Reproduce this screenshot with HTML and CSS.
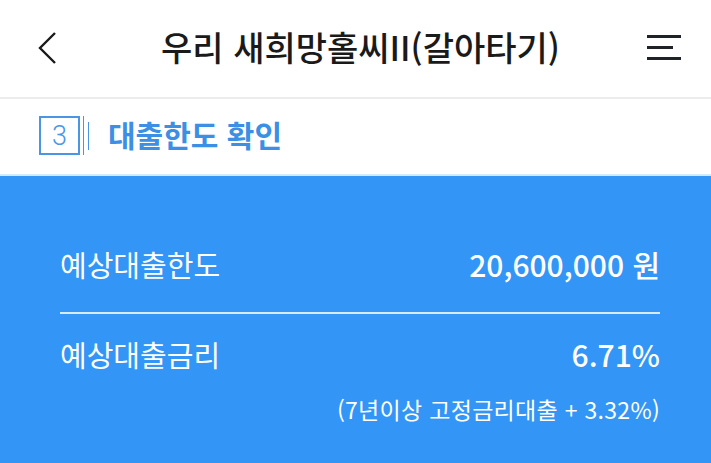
FILE: index.html
```html
<!DOCTYPE html>
<html lang="ko">
<head>
<meta charset="utf-8">
<link rel="stylesheet" href="styles.css">
</head>
<body>
<header class="topbar">
  <svg class="back" width="24" height="34" viewBox="0 0 24 34"><path d="M17 2 L2 17 L17 32" fill="none" stroke="#1a1a1a" stroke-width="2.4"/></svg>
  <h1 class="title">우리 새희망홀씨II(갈아타기)</h1>
  <svg class="menu" width="36" height="30" viewBox="0 0 36 30"><rect x="0" y="2" width="34" height="3" fill="#1f2327"/><rect x="0" y="13" width="26" height="3" fill="#1f2327"/><rect x="0" y="24" width="34" height="3" fill="#1f2327"/></svg>
</header>
<section class="step">
  <span class="step-num">3</span>
  <span class="step-bars"></span>
  <span class="step-text">대출한도 확인</span>
</section>
<section class="result">
  <div class="row">
    <span class="label">예상대출한도</span>
    <span class="value">20,600,000 원</span>
  </div>
  <div class="divider"></div>
  <div class="row row2">
    <span class="label">예상대출금리</span>
    <span class="value">6.71%</span>
  </div>
  <div class="note">(7년이상 고정금리대출 + 3.32%)</div>
</section>
</body>
</html>
```
FILE: styles.css
```css
* { box-sizing: border-box; }
html, body { margin: 0; padding: 0; }
body {
  width: 711px;
  height: 463px;
  overflow: hidden;
  background: #fff;
  font-family: "Noto Sans CJK KR", "Noto Sans", sans-serif;
}
.topbar {
  height: 99px;
  border-bottom: 2px solid #ececec;
  display: flex;
  align-items: center;
  padding: 0 28px 0 38px;
}
.back { flex: none; margin-top: -2px; }
.title {
  flex: 1;
  margin: 0;
  text-align: center;
  font-size: 34px;
  font-weight: 500;
  color: #1a1a1a;
  letter-spacing: 0;
  margin-top: -4px;
  padding-left: 12px;
}
.menu { flex: none; margin-top: -2px; }
.step {
  height: 77px;
  display: flex;
  align-items: center;
  padding-left: 39px;
  border-bottom: 2px solid #d6e8fb;
}
.step-num {
  width: 41px;
  height: 39px;
  border: 2px solid #4a96e4;
  color: #4a96e4;
  font-family: "Roboto", sans-serif;
  font-weight: 300;
  font-size: 27px;
  display: flex;
  align-items: center;
  justify-content: center;
  margin-top: -2px;
}
.step-bars {
  width: 7px;
  height: 39px;
  margin-left: 3px;
  margin-top: -2px;
  border-left: 1.5px solid #4a96e4;
  position: relative;
}
.step-bars::after {
  content: "";
  position: absolute;
  left: 4px;
  top: 6px;
  height: 28px;
  border-left: 1.5px solid #4a96e4;
}
.step-text {
  margin-left: 18px;
  font-size: 30px;
  font-weight: 700;
  color: #3b8fe4;
  letter-spacing: 0;
  margin-top: -6px;
}
.result {
  background: #3396f7;
  height: 300px;
  padding: 68px 51px 0 60px;
  color: #fff;
}
.row {
  display: flex;
  justify-content: space-between;
  align-items: center;
  height: 40px;
}
.label {
  font-size: 29px;
  font-weight: 400;
  letter-spacing: 0;
}
.value {
  font-size: 30px;
  font-weight: 500;
  letter-spacing: 0;
}
.divider {
  margin-top: 28px;
  height: 2px;
  background: #d8ebfd;
}
.row2 { margin-top: 20px; }
.note {
  margin-top: 20px;
  text-align: right;
  font-size: 23px;
  line-height: 30px;
  letter-spacing: 0.3px;
}
```
